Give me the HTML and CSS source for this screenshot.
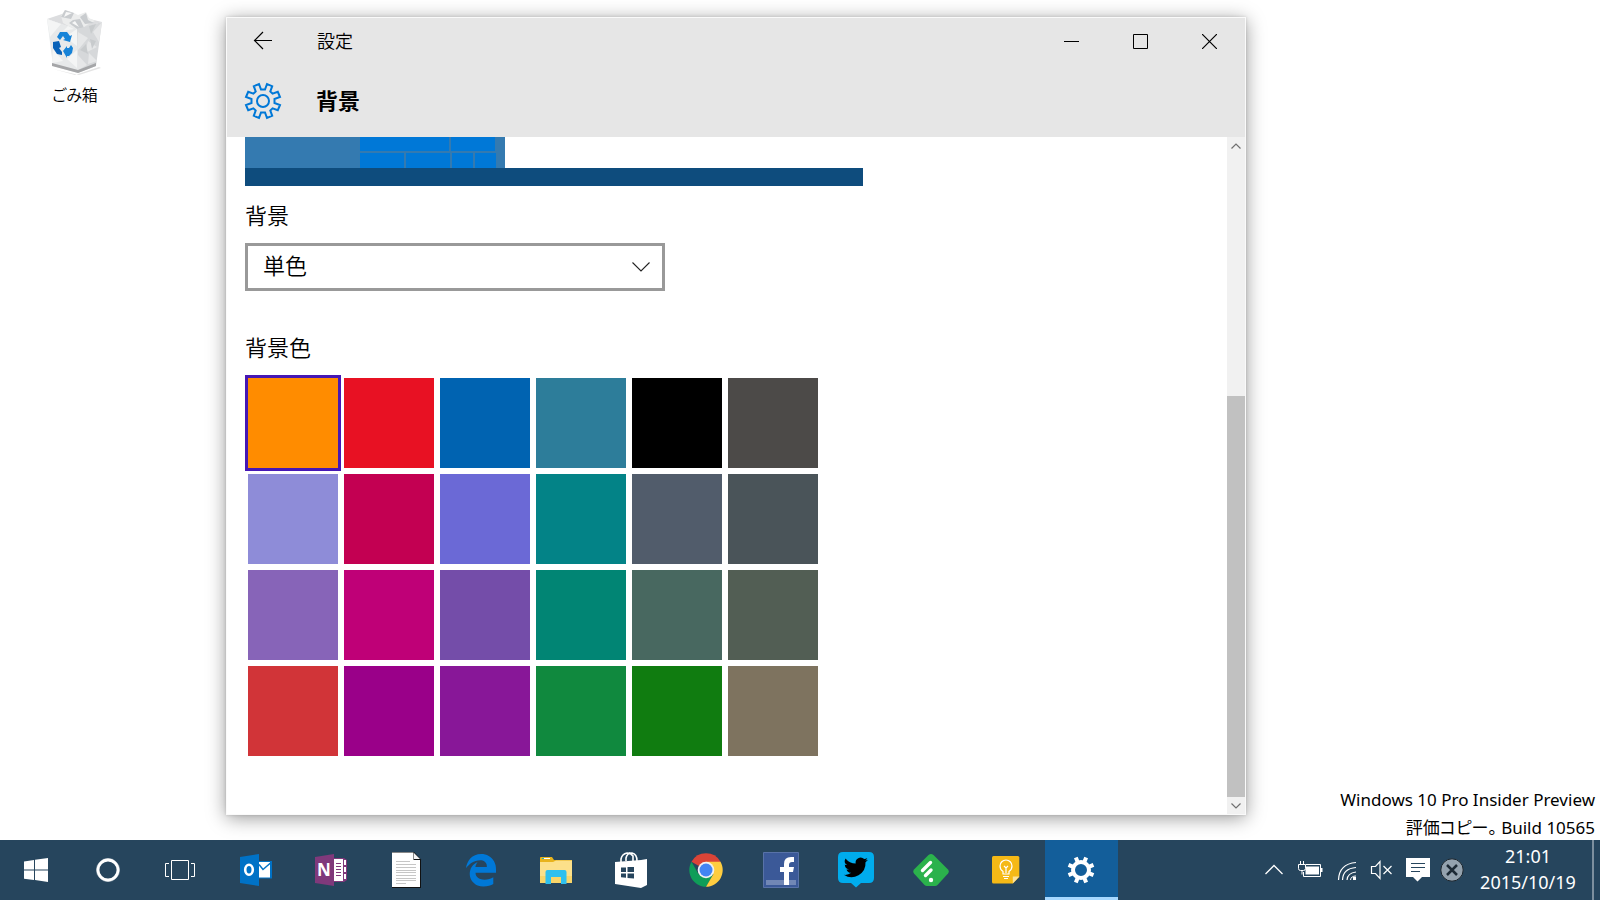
FILE: index.html
```html
<!DOCTYPE html>
<html lang="ja">
<head>
<meta charset="utf-8">
<meta name="viewport" content="width=device-width, initial-scale=1">
<title>設定 - 背景</title>
<link rel="stylesheet" href="styles.css">
</head>
<body>
<div class="screen">
  <main class="desktop">
    <div class="shortcuts">
      <button class="shortcut" type="button">
        <svg class="shortcut-icon" viewBox="0 0 60 66" aria-hidden="true">
          <path d="M8 60 30 66 54 58 56 59 34 66z" fill="#e4e4e4"/>
          <path d="M2 10 20 4 57 13 32 21z" fill="#dcdddf"/>
          <path d="m16 7 4-6 9 3 4 2 8-3 3 6 6 3-8 4-8 6-9-4-7-4z" fill="#eceded"/>
          <path d="m20 1 9 3-3 6-10-2zM28 11l7-1 4 9-7 1-8-6zM41 4l2 7 6 3-9 1-5-7z" fill="#c9cccf"/>
          <path d="m21 3 6 1-8 4zM30 12l4 6-7-4z" fill="#f8f8f8"/>
          <path d="M2 10 32 20 33 64 8 57z" fill="#e7e9ea"/>
          <path d="M32 20 57 13 51 57 33 64z" fill="#d6d8da"/>
          <path d="m2 10 14 5-11 13zM32 20 20 28l12 9zM8 40l10 12-11 2zM22 50l10-9v18zM18 22l5-5 6 3z" fill="#f4f5f5"/>
          <path d="m33 23 10 6-10 12zM57 13l-9 10 6 10zM52 38l-9-6-3 12zM33 46l9 10-9 5zM44 44l8 8-9 3z" fill="#e6e7e8"/>
          <path d="m44 17 7-2-5 10zM35 41l6-6 2 10zM45 30l6 2-4 8z" fill="#c8cbcd"/>
          <path d="m7 54 26 7 18-7v3l-18 7-26-7z" fill="#a5a6a8"/>
          <path d="m12 28 3-5 7 0 3 4 2-1-2 7-7-2 2-1-2-3-3 4z" fill="#1683d8"/>
          <path d="m8 33 6-1 2 6-2 1 3 4v3l-5-1-4-6z" fill="#0a62b8"/>
          <path d="m18 42 4-5v2l2 0 2-3 2 3-1 5-3 3-2 0v2z" fill="#1683d8"/>
        </svg>
        <span>ごみ箱</span>
      </button>
    </div>

    <section class="window" aria-label="設定">
      <header class="window-header">
        <div class="titlebar">
          <button class="back" type="button" aria-label="戻る">
            <svg width="20" height="20" viewBox="0 0 20 20"><path d="M19 9.500H1.500M10 1 1.500 9.500 10 18" fill="none" stroke="#000" stroke-width="1.200"/></svg>
          </button>
          <span class="app-name">設定</span>
          <div class="caption-buttons">
            <button type="button" aria-label="最小化"><svg width="15" height="15"><path d="M0 7.500h15" stroke="#000"/></svg></button>
            <button type="button" aria-label="最大化"><svg width="15" height="15"><path d="M.5.500h14v14H.5z" fill="none" stroke="#000"/></svg></button>
            <button type="button" aria-label="閉じる"><svg width="15" height="15"><path d="m0 0 15 15M15 0 0 15" stroke="#000" stroke-width="1.200"/></svg></button>
          </div>
        </div>
        <div class="page-heading">
          <svg class="gear" viewBox="-19 -19 38 38" aria-hidden="true">
            <path d="M-4-17-2-11.500H2L4-17 9.200-14.800 7.300-9.600 9.600-7.300 14.800-9.200 17-4 11.500-2V2L17 4 14.800 9.200 9.600 7.300 7.300 9.600 9.200 14.800 4 17 2 11.500H-2L-4 17-9.200 14.800-7.300 9.600-9.600 7.300-14.800 9.200-17 4-11.500 2V-2L-17-4-14.800-9.200-9.600-7.300-7.300-9.600-9.200-14.800z" fill="none" stroke="#0078d7" stroke-width="2"/>
            <circle r="6" fill="none" stroke="#0078d7" stroke-width="2"/>
          </svg>
          <h1>背景</h1>
        </div>
      </header>

      <div class="window-body">
        <form class="settings">
          <div class="preview" aria-hidden="true">
            <div class="preview-start">
              <div class="tile-row tile-row-wide"><i></i><i></i></div>
              <div class="tile-row tile-row-small"><i></i><i></i><i></i><i></i></div>
            </div>
            <div class="preview-bar"></div>
          </div>
          <label class="field-label" for="bg-kind">背景</label>
          <div class="select-wrap">
            <select id="bg-kind"><option>単色</option></select>
            <svg class="select-arrow" viewBox="0 0 18 10" aria-hidden="true"><path d="m.5.500 8.500 8.500 8.500-8.500" fill="none" stroke="#222" stroke-width="1.100"/></svg>
          </div>
          <fieldset class="colors">
            <legend class="field-label">背景色</legend>
            <div class="swatches">
              <input type="radio" name="c" class="c01" aria-label="オレンジ" checked>
              <input type="radio" name="c" class="c02" aria-label="赤">
              <input type="radio" name="c" class="c03" aria-label="青">
              <input type="radio" name="c" class="c04" aria-label="青緑">
              <input type="radio" name="c" class="c05" aria-label="黒">
              <input type="radio" name="c" class="c06" aria-label="濃い灰色">
              <input type="radio" name="c" class="c07" aria-label="薄紫">
              <input type="radio" name="c" class="c08" aria-label="ローズ">
              <input type="radio" name="c" class="c09" aria-label="藍">
              <input type="radio" name="c" class="c10" aria-label="ティール">
              <input type="radio" name="c" class="c11" aria-label="青灰色">
              <input type="radio" name="c" class="c12" aria-label="鋼色">
              <input type="radio" name="c" class="c13" aria-label="すみれ色">
              <input type="radio" name="c" class="c14" aria-label="マゼンタ">
              <input type="radio" name="c" class="c15" aria-label="紫">
              <input type="radio" name="c" class="c16" aria-label="緑青">
              <input type="radio" name="c" class="c17" aria-label="苔色">
              <input type="radio" name="c" class="c18" aria-label="灰緑">
              <input type="radio" name="c" class="c19" aria-label="れんが色">
              <input type="radio" name="c" class="c20" aria-label="赤紫">
              <input type="radio" name="c" class="c21" aria-label="濃い紫">
              <input type="radio" name="c" class="c22" aria-label="緑">
              <input type="radio" name="c" class="c23" aria-label="深緑">
              <input type="radio" name="c" class="c24" aria-label="砂色">
            </div>
          </fieldset>
        </form>
        <div class="scrollbar">
          <button type="button" aria-label="上へ"><svg width="10" height="6"><path d="m.5 5.500 4.500-4.500 4.500 4.500" fill="none" stroke="#707070" stroke-width="1.200"/></svg></button>
          <div class="track"><div class="thumb"></div></div>
          <button type="button" aria-label="下へ"><svg width="10" height="6"><path d="m.5.500 4.500 4.500 4.500-4.500" fill="none" stroke="#707070" stroke-width="1.200"/></svg></button>
        </div>
      </div>
    </section>

    <div class="watermark">
      <div>Windows 10 Pro Insider Preview</div>
      <div>評価コピー。 Build 10565</div>
    </div>
  </main>

  <nav class="taskbar" aria-label="タスク バー">
    <div class="system">
      <button type="button" aria-label="スタート"><svg class="icon" viewBox="0 0 36 36"><path d="M6 9.500 16 8v9.500H6zM17 7.800 30 6v11.500H17zM6 18.500h10V28L6 26.800zM17 18.500h13V30l-13-1.900z" fill="#fff"/></svg></button>
      <button type="button" aria-label="Cortana"><svg class="icon" viewBox="0 0 36 36"><circle cx="18" cy="18" r="10" fill="none" stroke="#fff" stroke-width="2.800"/><circle cx="18" cy="18" r="11.500" fill="none" stroke="#fff" stroke-opacity=".5"/></svg></button>
      <button type="button" aria-label="タスク ビュー"><svg class="icon" viewBox="0 0 36 36"><path d="M9.500 8.500h17v19h-17zM7 11.500H3.500v13H7M29 11.500h3.500v13H29" fill="none" stroke="#fff"/></svg></button>
    </div>
    <div class="pinned">
      <button type="button" aria-label="Outlook"><svg class="icon" viewBox="0 0 36 36"><path d="M20 9h14v17.500H20z" fill="#0072c6"/><path d="M21 10h11v15.500H21z" fill="#fff"/><path d="m21 12.500 4 5L32.500 11" fill="none" stroke="#0072c6" stroke-width="1.500"/><path d="M2 5 21 2v32L2 31z" fill="#0072c6"/><ellipse cx="11" cy="17.700" rx="3.800" ry="5" fill="none" stroke="#fff" stroke-width="2.600"/></svg></button>
      <button type="button" aria-label="OneNote"><svg class="icon" viewBox="0 0 36 36"><path d="M20 6h11l3 2v20l-3 2H20z" fill="#80397b"/><path d="M21 7h9v22h-9z" fill="#fff"/><path d="M23 11.500h5M23 14.500h5M23 17.500h5M23 20.500h5M23 23.500h5" stroke="#80397b"/><path d="M32 8v5M32 15v5M32 22v5" stroke="#fff" stroke-width="2"/><path d="M2 5 21 2v32L2 31z" fill="#80397b"/><text x="11" y="24" text-anchor="middle" class="letter-n">N</text></svg></button>
      <button type="button" aria-label="メモ帳"><svg class="icon" viewBox="0 0 36 36"><path d="M4 0h22l7 7.500V36H4z" fill="#111"/><path d="M4 .5h21.500V8H32v27H4z" fill="#fff"/><path d="m26 1 6 6h-6z" fill="#f4f4f4"/><path d="M8 9.500h14M8 12.500h20M8 15.500h20M8 18.500h20M8 20.500h20M8 23.500h20M8 26.500h20M8 28.500h20M8 31.500h10" stroke="#c6c6c6"/></svg></button>
      <button type="button" aria-label="Edge"><svg class="icon" viewBox="0 0 36 36"><path transform="translate(1.300 1.500) scale(.0652)" fill="#0078d7" d="M26 227.700C40.600 113.200 119 7.700 258.900 8c85 0 157.600 39.900 198.600 113.300 21 37.900 28.800 78.400 28.800 122.400v52H172.200c1.400 128.500 191.400 124.100 272.300 67.600v105.400c-47.400 28.500-156.800 53.200-240.200 21.300-70.600-27.100-119.900-100.500-120.700-172-1.100-92.200 45.700-153.400 120.700-188.300-15.700 19.900-27.900 41.500-34.300 78.900h175.800c10.200-105-99.400-105-99.400-105C143 106.300 68.400 166.400 26 227.700z"/></svg></button>
      <button type="button" aria-label="エクスプローラー"><svg class="icon" viewBox="0 0 36 36"><path d="M2 6q0-1 1-1h11l2 3h18v22H2z" fill="#e8b31c"/><path d="M4 6.500h8" stroke="#fff"/><path d="M4 6.500h2" stroke="#22b0c8"/><path d="M2 10h13l3-1.500h16V31H2z" fill="#fce08a"/><path d="M2 24h32v7H2z" fill="#f9d568"/><path d="M9.500 18h17q2 0 2 2v12H23v-7H13v7H7.500V20q0-2 2-2z" fill="#2fc0ee"/></svg></button>
      <button type="button" aria-label="ストア"><svg class="icon" viewBox="0 0 36 36"><path d="m2 10 26-2 6-1v26l-6 3-26-4z" fill="#fff"/><path d="M8 10V7q1-5 6-6 4 0 6 3v5M13 9V6q1-5 6-5 5 1 5 8" fill="none" stroke="#fff" stroke-width="1.600"/><path d="M8 15.500h5V20H8zM14.500 15H21v5h-6.500zM8 21.500h5v4.200l-5-.4zM14.500 21.500H21v5l-6.500-.6z" fill="#26455d"/></svg></button>
      <button type="button" aria-label="Chrome"><svg class="icon" viewBox="0 0 36 36"><path d="M18 18 3.500 9.700A16.700 16.700 0 0 1 32.500 9.700z" fill="#db4437"/><path d="M10.600 22.300 3.500 9.700A16.700 16.700 0 0 0 18 34.700l7.300-12.500z" fill="#0f9d58"/><path d="M18 9.700h14.500A16.700 16.700 0 0 1 18 34.700l7.300-12.500z" fill="#ffcd40"/><circle cx="18" cy="18" r="8.300" fill="#f1f1f1"/><circle cx="18" cy="18" r="6.500" fill="#4285f4"/></svg></button>
      <button type="button" aria-label="Facebook"><svg class="icon" viewBox="0 0 36 36"><path d="M.5.500h35v35H.5z" fill="#3b5998" stroke="#5872a8"/><path d="M3 28h30v5H3z" fill="#7187b5"/><path d="M21 33V20h-4v-5h4v-3q0-7 7-7h3v5h-2q-3 0-3 3v2h5l-1 5h-4v13z" fill="#fff"/></svg></button>
      <button type="button" aria-label="Twitter"><svg class="icon" viewBox="0 0 36 36"><path d="M5 0h26q5 0 5 5v21q0 5-5 5h-8l-5 4.500-5-4.500H5q-5 0-5-5V5q0-5 5-5z" fill="#00aced"/><path transform="translate(5.800 3.200)" d="M24.200 4.600a10 10 0 0 1-2.800.8 5 5 0 0 0 2.100-2.700 10 10 0 0 1-3.100 1.200 5 5 0 0 0-8.500 4.500A14 14 0 0 1 1.700 3.200a5 5 0 0 0 1.500 6.600A5 5 0 0 1 1 9.200a5 5 0 0 0 4 4.900 5 5 0 0 1-2.300.1 5 5 0 0 0 4.700 3.400A10 10 0 0 1 0 19.600a14 14 0 0 0 21.700-12.500 10 10 0 0 0 2.500-2.500z"/></svg></button>
      <button type="button" aria-label="Feedly"><svg class="icon" viewBox="0 0 36 36"><path d="M15.500 3q2.500-2 5 0L35 17.500q1.500 2 0 4L24.500 33q-1 1-2.500 1h-8q-1.500 0-2.500-1L1 21.500q-1.500-2 0-4z" fill="#2bb24c"/><path d="m9.500 18.500 8-8M12.500 23.500l5.500-5.500" stroke="#fff" stroke-width="3.400" stroke-linecap="round"/><circle cx="18" cy="28" r="2.200" fill="#fff"/></svg></button>
      <button type="button" aria-label="Keep"><svg class="icon" viewBox="0 0 36 36"><path d="M5.500 4h24.300q1.500 0 1.500 1.500V25l-6.500 6.500H5.500Q4 31.500 4 30V5.500Q4 4 5.500 4z" fill="#f5b916"/><path d="M31.300 24.500h-6.500v7z" fill="#fbe29a"/><path d="M15 22v-2.500q-3-2-3-5.500a6 6 0 0 1 12 0q0 3.500-3 5.500V22zM15 24.500h6M16 26.500h4M16 14l2 2 2-2M18 16v5" fill="none" stroke="#fff" stroke-width="1.200"/></svg></button>
      <button type="button" class="active" aria-label="設定"><svg class="icon" viewBox="-18 -18 36 36"><circle r="8" fill="none" stroke="#fff" stroke-width="4"/><g stroke="#fff" stroke-width="4"><path d="M0-9v-4.500M0 9v4.500M-9 0h-4.500M9 0h4.500" transform="rotate(22.500)"/><path d="M0-9v-4.500M0 9v4.500M-9 0h-4.500M9 0h4.500" transform="rotate(-22.500)"/></g></svg></button>
    </div>
    <div class="tray">
      <button type="button" aria-label="隠れているインジケーター"><svg class="tray-icon" viewBox="0 0 24 24"><path d="m3.500 16 8.500-8.500 8.500 8.500" fill="none" stroke="#fff" stroke-width="1.300"/></svg></button>
      <button type="button" aria-label="バッテリ"><svg class="tray-icon" viewBox="0 0 24 24"><path d="M8 6.500h14.500v12h-17V14" fill="none" stroke="#fff"/><path d="M7.500 8.500H21v8H7.500zM23 10h1.500v4H23z" fill="#fff"/><path d="M.5 6.500h7v4q0 2-2 2h-3q-2 0-2-2zM2.500 3v3.500M5.500 3v3.500M4 12.500v4" fill="#26455d" stroke="#fff"/></svg></button>
      <button type="button" aria-label="ネットワーク"><svg class="tray-icon" viewBox="0 0 24 24"><path d="M4.500 22Q5 6 22 4.500M8.500 22Q9 10.500 22 9.500M13 22q.5-7 9-8" fill="none" stroke="#fff" stroke-width="1.200"/><path d="M16.500 22q.5-4 5.500-4" fill="none" stroke="#fff"/><path d="M19 19h3v3h-3z" fill="#fff"/></svg></button>
      <button type="button" aria-label="音量"><svg class="tray-icon" viewBox="0 0 24 24"><path d="M1.500 8.500h4l4.500-5v17l-4.500-5h-4zM13.500 8l8 8M21.500 8l-8 8" fill="none" stroke="#fff" stroke-width="1.200"/></svg></button>
      <button type="button" aria-label="通知"><svg class="tray-icon" viewBox="0 0 24 24"><path d="M0 0h24v19h-8l-4.500 4.500L7 19H0z" fill="#fff"/><path d="M5 5.500h14M5 9.500h14M5 13.500h9" stroke="#26455d" stroke-width="1.200"/></svg></button>
      <button type="button" class="stopped" aria-label="停止中"><svg class="tray-icon" viewBox="0 0 24 24"><circle cx="12" cy="12" r="11.200" fill="#94a2ae" stroke="#1a242c"/><path d="m7 7 10 10M17 7 7 17" stroke="#1d2a35" stroke-width="2.500"/></svg></button>
      <button type="button" class="clock"><time>21:01</time><span>2015/10/19</span></button>
      <button type="button" class="show-desktop" aria-label="デスクトップの表示"></button>
    </div>
  </nav>
</div>
</body>
</html>
```
FILE: styles.css
```css
* {
  box-sizing: border-box;
}

body {
  margin: 0;
  background: #fff;
  color: #000;
  font-family: "Noto Sans", "Noto Sans CJK JP", sans-serif;
  font-size: 17px;
}

button {
  display: flex;
  align-items: center;
  justify-content: center;
  margin: 0;
  padding: 0;
  border: 0;
  background: none;
  color: inherit;
  font: inherit;
}

svg {
  display: block;
}

.screen {
  display: flex;
  flex-direction: column;
  min-height: 100vh;
}

.desktop {
  position: relative;
  flex: 1;
  display: grid;
  grid-template-columns: 226px minmax(0, 1fr);
  padding: 17px 354px 25px 0;
}

/* Desktop shortcuts */
.shortcuts {
  padding-left: 30px;
}

.shortcut {
  flex-direction: column;
  gap: 7px;
  width: 90px;
  margin-top: -8px;
  font-family: "Noto Sans CJK JP", sans-serif;
  font-size: 16px;
  font-weight: 350;
  font-feature-settings: "palt";
  line-height: 24px;
}

.shortcut-icon {
  width: 60px;
  height: 66px;
}

/* Settings window */
.window {
  display: flex;
  flex-direction: column;
  min-width: 0;
  border: 1px solid #fafafa;
  background: #fff;
  box-shadow: 0 3px 18px rgba(0, 0, 0, .4), 0 0 3px rgba(0, 0, 0, .15);
}

.window-header {
  height: 119px;
  background: #e6e6e6;
}

.titlebar {
  display: flex;
  align-items: center;
  height: 46px;
}

.back {
  width: 72px;
  height: 46px;
}

.app-name {
  padding: 0 0 2px 18px;
  font-family: "Noto Sans CJK JP", sans-serif;
  font-size: 18px;
  font-weight: 350;
  line-height: 26px;
}

.caption-buttons {
  display: flex;
  margin: 0 1px 0 auto;
}

.caption-buttons button {
  width: 69px;
  height: 46px;
}

.page-heading {
  display: flex;
  align-items: center;
  gap: 34px;
  height: 73px;
  padding: 1px 0 0 17px;
}

.gear {
  width: 38px;
  height: 38px;
}

h1 {
  margin: 0;
  padding-bottom: 4px;
  font-family: "Noto Sans CJK JP", sans-serif;
  font-size: 22px;
  font-weight: 700;
  line-height: 32px;
}

.window-body {
  flex: 1;
  display: flex;
}

.settings {
  flex: 1;
  min-width: 0;
  padding: 0 18px;
}

.preview {
  max-width: 618px;
}

.preview-start {
  display: flex;
  flex-direction: column;
  gap: 2px;
  width: 260px;
  height: 31px;
  padding: 0 9px 0 115px;
  background: #347ab0;
}

.tile-row {
  display: grid;
  gap: 2px;
}

.tile-row-wide {
  grid-template-columns: 89px 44px;
  height: 14px;
}

.tile-row-small {
  grid-template-columns: 44px 44px 21px 21px;
  height: 15px;
}

.tile-row i {
  background: #0078d7;
}

.preview-bar {
  height: 18px;
  background: #0e4c7d;
}

.field-label {
  display: block;
  padding: 0;
  font-family: "Noto Sans CJK JP", sans-serif;
  font-size: 22px;
  font-weight: 350;
  line-height: 32px;
}

.preview + .field-label {
  margin: 12px 0 13px;
}

.select-wrap {
  position: relative;
  max-width: 420px;
}

select {
  display: block;
  width: 100%;
  height: 48px;
  padding: 0 40px 6px 15px;
  border: 3px solid #999;
  border-radius: 0;
  appearance: none;
  background: #fff;
  color: #000;
  font-family: "Noto Sans CJK JP", sans-serif;
  font-size: 22px;
  font-weight: 350;
}

.select-arrow {
  position: absolute;
  top: 19px;
  right: 15px;
  width: 18px;
  height: 10px;
  pointer-events: none;
}

.colors {
  margin: 39px 0 0;
  padding: 0;
  border: 0;
}

.swatches {
  display: grid;
  grid-template-columns: repeat(6, 96px);
  margin-top: 13px;
}

.swatches input {
  width: 96px;
  height: 96px;
  margin: 0;
  border: 3px solid transparent;
  appearance: none;
  background-clip: padding-box;
}

.swatches input:checked {
  border-color: #4617b4;
}

.c01 { background-color: #ff8c00; }
.c02 { background-color: #e81123; }
.c03 { background-color: #0063b1; }
.c04 { background-color: #2d7d9a; }
.c05 { background-color: #000; }
.c06 { background-color: #4c4a48; }
.c07 { background-color: #8e8cd8; }
.c08 { background-color: #c30052; }
.c09 { background-color: #6b69d6; }
.c10 { background-color: #038387; }
.c11 { background-color: #515c6b; }
.c12 { background-color: #4a5459; }
.c13 { background-color: #8764b8; }
.c14 { background-color: #bf0077; }
.c15 { background-color: #744da9; }
.c16 { background-color: #018574; }
.c17 { background-color: #486860; }
.c18 { background-color: #525e54; }
.c19 { background-color: #d13438; }
.c20 { background-color: #9a0089; }
.c21 { background-color: #881798; }
.c22 { background-color: #10893e; }
.c23 { background-color: #107c10; }
.c24 { background-color: #7e735f; }

.scrollbar {
  display: flex;
  flex-direction: column;
  width: 18px;
  background: #f1f1f1;
}

.scrollbar button {
  height: 17px;
}

.track {
  flex: 1;
  display: flex;
  flex-direction: column;
  justify-content: flex-end;
}

.thumb {
  height: 62.400%;
  background: #c1c1c1;
}

.watermark {
  position: absolute;
  right: 5px;
  bottom: -2px;
  font-size: 17px;
  font-feature-settings: "palt";
  line-height: 28px;
  text-align: right;
}

/* Taskbar */
.taskbar {
  display: flex;
  height: 60px;
  background: #26455d;
  color: #fff;
}

.system {
  display: flex;
}

.system button {
  width: 72px;
}

.pinned {
  display: flex;
  gap: 2px;
  margin-left: 4px;
}

.pinned button {
  width: 73px;
  padding-right: 1px;
}

.pinned .active {
  background: linear-gradient(#a6d8ff, #a6d8ff) bottom / 100% 3px no-repeat #135e9a;
}

.icon {
  width: 36px;
  height: 36px;
}

.letter-n {
  fill: #fff;
  font-family: "Open Sans", sans-serif;
  font-size: 17px;
  font-weight: 700;
}

.tray {
  display: flex;
  margin-left: auto;
}

.tray button {
  width: 36px;
}

.tray .stopped {
  width: 32px;
}

.tray-icon {
  width: 24px;
  height: 24px;
  overflow: visible;
}

.tray .clock {
  flex-direction: column;
  width: 124px;
  padding: 0 4px 2px 0;
  font-size: 18px;
  line-height: 26px;
}

.tray .show-desktop {
  width: 8px;
  border-left: 2px solid #7d8f9e;
}
```
